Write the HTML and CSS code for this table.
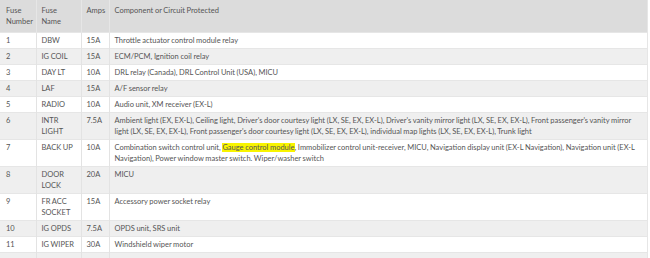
FILE: index.html
```html
<!DOCTYPE html>
<html>
<head>
<meta charset="utf-8">
<link rel="stylesheet" href="styles.css">
</head>
<body>
<table class="fuse-table">
  <colgroup>
    <col class="c-num"><col class="c-name"><col class="c-amps"><col class="c-comp">
  </colgroup>
  <thead>
    <tr><th>Fuse Number</th><th>Fuse Name</th><th>Amps</th><th>Component or Circuit Protected</th></tr>
  </thead>
  <tbody>
    <tr><td>1</td><td>DBW</td><td>15A</td><td>Throttle actuator control module relay</td></tr>
    <tr><td>2</td><td>IG COIL</td><td>15A</td><td>ECM/PCM, Ignition coil relay</td></tr>
    <tr><td>3</td><td>DAY LT</td><td>10A</td><td>DRL relay (Canada), DRL Control Unit (USA), MICU</td></tr>
    <tr><td>4</td><td>LAF</td><td>15A</td><td>A/F sensor relay</td></tr>
    <tr><td>5</td><td>RADIO</td><td>10A</td><td>Audio unit, XM receiver (EX-L)</td></tr>
    <tr><td>6</td><td>INTR LIGHT</td><td>7.5A</td><td>Ambient light (EX, EX-L), Ceiling light, Driver's door courtesy light (LX, SE, EX, EX-L), Driver's vanity mirror light (LX, SE, EX, EX-L), Front passenger's vanity mirror light (LX, SE, EX, EX-L), Front passenger's door courtesy light (LX, SE, EX, EX-L), individual map lights (LX, SE, EX, EX-L), Trunk light</td></tr>
    <tr><td>7</td><td>BACK UP</td><td>10A</td><td>Combination switch control unit, <mark class="hl">Gauge control module</mark>, Immobilizer control unit-receiver, MICU, Navigation display unit (EX-L Navigation), Navigation unit (EX-L Navigation), Power window master switch. Wiper/washer switch</td></tr>
    <tr><td>8</td><td>DOOR LOCK</td><td>20A</td><td>MICU</td></tr>
    <tr><td>9</td><td>FR ACC SOCKET</td><td>15A</td><td>Accessory power socket relay</td></tr>
    <tr><td>10</td><td>IG OPDS</td><td>7.5A</td><td>OPDS unit, SRS unit</td></tr>
    <tr><td>11</td><td>IG WIPER</td><td>30A</td><td>Windshield wiper motor</td></tr>
    <tr><td>&nbsp;</td><td>&nbsp;</td><td>&nbsp;</td><td>&nbsp;</td></tr>
  </tbody>
</table>
</body>
</html>
```
FILE: styles.css
```css
html, body {
  margin: 0;
  padding: 0;
  background: #ffffff;
}
.fuse-table {
  width: 648px;
  border-collapse: collapse;
  table-layout: fixed;
  font-family: "Lato", sans-serif;
  font-size: 7.5px;
  word-spacing: -0.3px;
  line-height: 11px;
  color: #555555;
}
.c-num { width: 36px; }
.c-name { width: 45px; }
.c-amps { width: 28px; }
.fuse-table th {
  background: #dcdcdc;
  font-weight: normal;
  text-align: left;
  vertical-align: top;
  padding: 5px 5px;
  border-left: 1px solid #e6e6e6;
}
.fuse-table td {
  text-align: left;
  vertical-align: top;
  padding: 2px 4px 2px 5px;
  border-left: 1px solid #e3e3e3;
  border-top: 1px solid #e6e6e6;
}
.fuse-table th:first-child, .fuse-table td:first-child { border-left: none; padding-left: 6px; }
.fuse-table th:last-child, .fuse-table td:last-child { border-right: 1px solid #e6e6e6; }
.fuse-table tbody tr:nth-child(even) td { background: #efefef; }
.hl {
  background: #f8f400;
  color: #555555;
  padding: 0;
}
```
